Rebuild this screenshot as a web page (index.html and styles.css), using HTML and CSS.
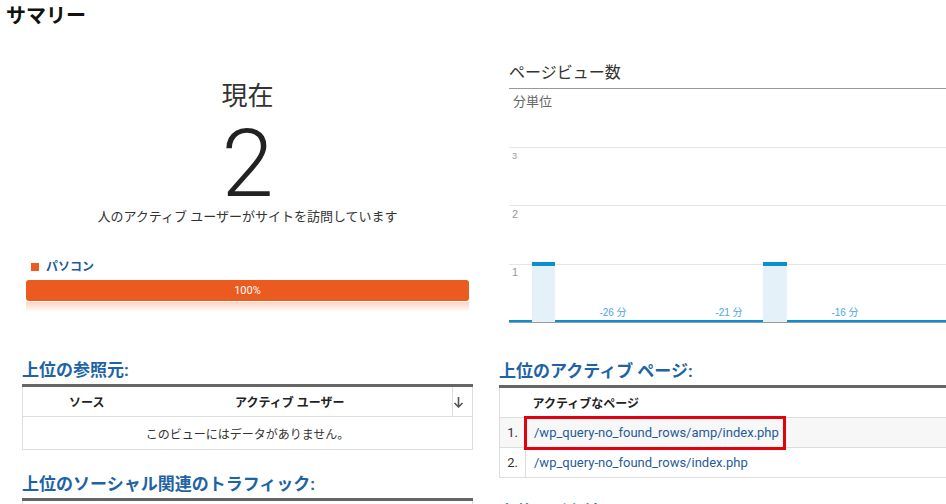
FILE: index.html
```html
<!DOCTYPE html>
<html>

<head>
    <meta charset="utf-8">
    <meta name="viewport" content="width=device-width">
    <title>サマリー</title>
    <link rel="stylesheet" href="styles.css">
</head>

<body>
    <h1 class="title">サマリー</h1>
    <div class="cols">
        <div class="col">
            <div class="now">
                <div class="now-label">現在</div>
                <div class="now-count">2</div>
                <div class="now-desc">人のアクティブ ユーザーがサイトを訪問しています</div>
            </div>
            <div class="legend"><span class="swatch"></span>パソコン</div>
            <div class="bar">100%</div>
            <div class="bar-reflect"></div>

            <h2 class="block-title">上位の参照元:</h2>
            <table class="grid">
                <thead>
                    <tr>
                        <th class="src">ソース</th>
                        <th class="users">アクティブ ユーザー</th>
                        <th class="sort">
                            <svg width="11" height="12" viewBox="0 0 11 12">
                                <path d="M5.5 1v10M1.5 7l4 4 4-4" fill="none" stroke="#555" stroke-width="1.6"/>
                            </svg>
                        </th>
                    </tr>
                </thead>
                <tbody>
                    <tr>
                        <td class="empty" colspan="3">このビューにはデータがありません。</td>
                    </tr>
                </tbody>
            </table>

            <h2 class="block-title">上位のソーシャル関連のトラフィック:</h2>
            <table class="grid">
                <tbody>
                    <tr>
                        <td class="empty">&nbsp;</td>
                    </tr>
                </tbody>
            </table>
        </div>

        <div class="col">
            <div class="chart-box">
                <div class="chart-title">ページビュー数</div>
                <div class="chart-unit">分単位</div>
                <svg class="chart" width="437" height="186" viewBox="0 0 437 186">
                    <g fill="#e6e6e6">
                        <rect x="0" y="8" width="437" height="1"/>
                        <rect x="0" y="66" width="437" height="1"/>
                        <rect x="0" y="125" width="437" height="1"/>
                    </g>
                    <g class="y-labels" fill="#999">
                        <text x="3" y="20" font-size="9">3</text>
                        <text x="3" y="79" font-size="11">2</text>
                        <text x="3" y="137" font-size="11">1</text>
                    </g>
                    <rect x="0" y="181" width="437" height="2" fill="#0b8fcf"/>
                    <rect x="0" y="183" width="437" height="1" fill="#9a9a9a"/>
                    <g>
                        <rect x="23" y="123" width="23" height="60" fill="#e5f1f8"/>
                        <rect x="23" y="123" width="23" height="4" fill="#0b8fcf"/>
                        <rect x="254" y="123" width="24" height="60" fill="#e5f1f8"/>
                        <rect x="254" y="123" width="24" height="4" fill="#0b8fcf"/>
                    </g>
                    <g class="x-labels" fill="#4ea6db" font-size="10" text-anchor="middle">
                        <text x="104" y="177">-26 分</text>
                        <text x="220" y="177">-21 分</text>
                        <text x="336" y="177">-16 分</text>
                    </g>
                </svg>
            </div>

            <h2 class="block-title right">上位のアクティブ ページ:</h2>
            <table class="grid pages">
                <thead>
                    <tr>
                        <th class="num"></th>
                        <th class="page">アクティブなページ</th>
                    </tr>
                </thead>
                <tbody>
                    <tr class="odd">
                        <td class="num">1.</td>
                        <td class="page"><a href="#">/wp_query-no_found_rows/amp/index.php</a><span class="mark"></span></td>
                    </tr>
                    <tr>
                        <td class="num">2.</td>
                        <td class="page"><a href="#">/wp_query-no_found_rows/index.php</a></td>
                    </tr>
                </tbody>
            </table>

            <h2 class="block-title right">上位の所在地:</h2>
        </div>
    </div>
</body>

</html>
```

FILE: styles.css
```css
* {
    margin: 0;
    padding: 0;
    box-sizing: border-box;
}

body {
    width: 946px;
    height: 504px;
    overflow: hidden;
    background: #fff;
    color: #333;
    font-family: Roboto, "Noto Sans CJK JP", sans-serif;
}

.title {
    padding: 4px 6px 0;
    font-size: 20px;
    line-height: 24px;
    font-weight: bold;
    color: #111;
}

.cols {
    display: grid;
    grid-template-columns: 451px 451px;
    column-gap: 26px;
    padding-left: 22px;
}

/* current users */

.now {
    text-align: center;
    padding-top: 53px;
}

.now-label {
    font-size: 26px;
    line-height: 30px;
    color: #333;
}

.now-count {
    margin-top: 18px;
    font-size: 94px;
    line-height: 70px;
    font-weight: 300;
    color: #222;
}

.now-desc {
    margin-top: 10px;
    font-size: 13px;
    line-height: 16px;
    color: #333;
}

.legend {
    display: flex;
    align-items: center;
    margin: 34px 0 0 9px;
    font-size: 12px;
    line-height: 16px;
    font-weight: bold;
    color: #1a5d9a;
}

.swatch {
    width: 8px;
    height: 8px;
    margin-right: 7px;
    background: #eb5a1e;
}

.bar {
    margin: 5px 4px 0;
    height: 21px;
    line-height: 21px;
    border-radius: 3px;
    background: #eb5a1e;
    color: #fff;
    font-size: 11px;
    text-align: center;
}

.bar-reflect {
    margin: 1px 4px 0;
    height: 10px;
    background: linear-gradient(#fcd3c2, #fff);
}

/* tables */

.block-title {
    margin-top: 47px;
    font-size: 17px;
    line-height: 22px;
    font-weight: bold;
    color: #1e64a5;
}

.block-title.right {
    margin-top: 35px;
}

.grid+.block-title,
.grid+.block-title.right {
    margin-top: 23px;
}

.grid {
    width: 100%;
    margin-top: 3px;
    border-collapse: collapse;
    border-top: 3px solid #666;
    font-size: 12px;
}

.grid th,
.grid td {
    border-left: 1px solid #ddd;
    border-right: 1px solid #ddd;
    border-bottom: 1px solid #ddd;
}

.grid th {
    height: 31px;
    font-weight: bold;
    color: #222;
    text-align: left;
}

.grid th+th,
.grid td+td {
    border-left: none;
}

.grid thead th:first-child {
    border-right: none;
}

.grid .src {
    width: 105px;
    padding-left: 46px;
}

.grid .users {
    text-align: center;
}

.grid .sort {
    width: 20px;
    padding-top: 3px;
}

.grid .empty {
    height: 33px;
    text-align: center;
    color: #333;
}

.pages td {
    height: 30px;
}

.pages .num {
    width: 26px;
    text-align: center;
    font-size: 13px;
    color: #333;
}

.pages th.page {
    padding-left: 7px;
}

.pages td.page {
    position: relative;
    padding-left: 8px;
    border-left: 1px solid #ddd;
}

.pages .odd td {
    background: #f7f7f7;
}

.pages a {
    color: #1f5c99;
    font-size: 13px;
    text-decoration: none;
}

.mark {
    position: absolute;
    left: -2px;
    top: -2px;
    width: 262px;
    height: 34px;
    border: 3px solid #e3000f;
}

/* chart */

.chart-box {
    margin-left: 10px;
}

.chart-title {
    padding-top: 35px;
    padding-bottom: 5px;
    border-bottom: 1px solid #999;
    font-size: 16px;
    line-height: 20px;
    color: #333;
}

.chart-unit {
    margin: 4px 0 0 4px;
    font-size: 13px;
    line-height: 18px;
    color: #666;
}

.chart {
    display: block;
    margin-top: 28px;
    font-family: "Liberation Sans", "Noto Sans CJK JP", sans-serif;
}
```
